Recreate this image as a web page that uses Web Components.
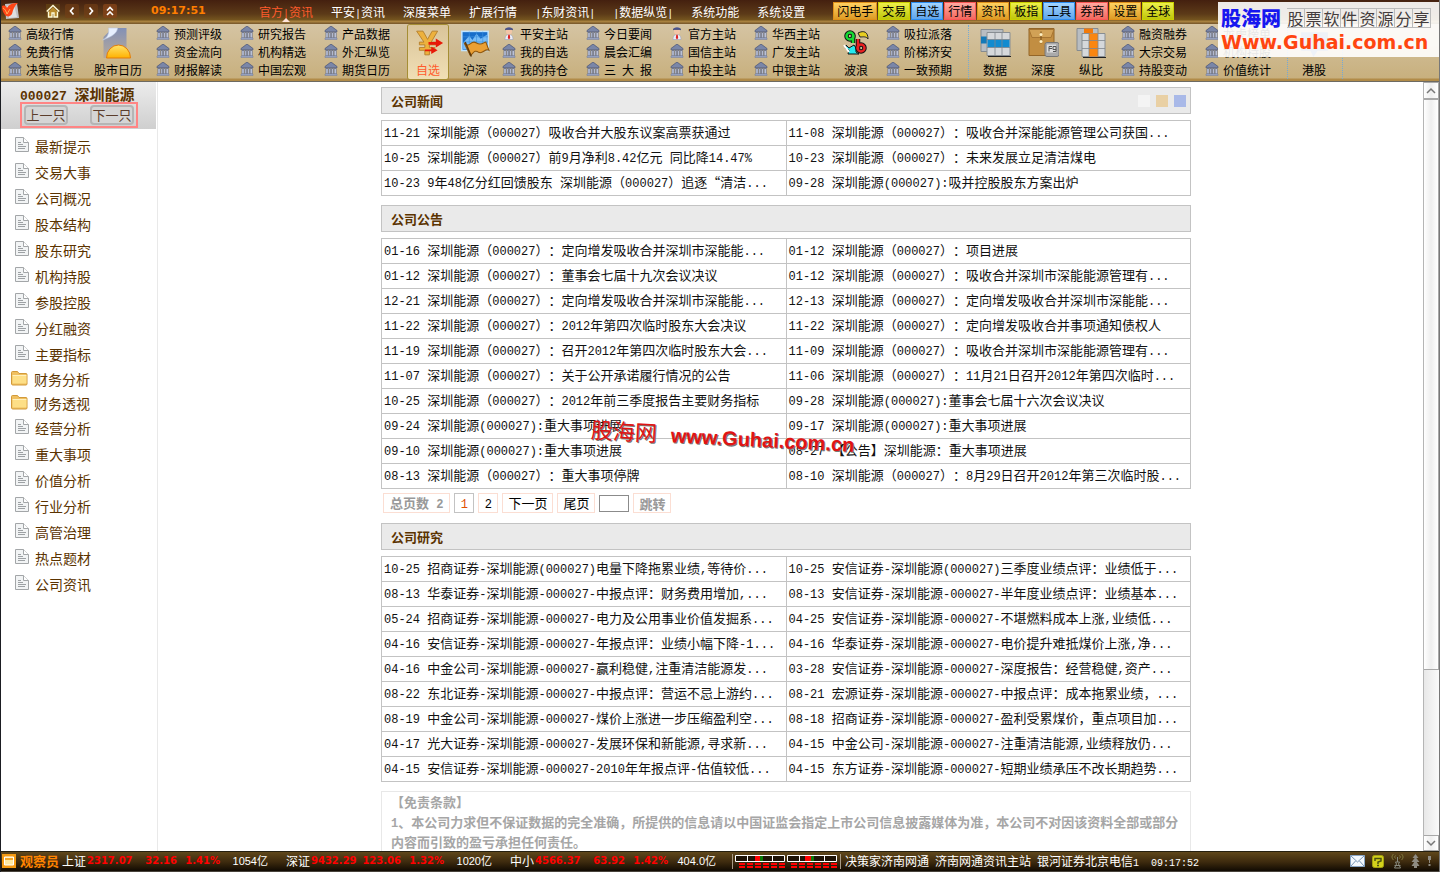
<!DOCTYPE html>
<html lang="zh-CN">
<head>
<meta charset="utf-8">
<title>深圳能源 000027 - 公司资讯</title>
<style>
html,body{margin:0;height:100%}
body{font:12px/18px "Noto Sans CJK SC",sans-serif;color:#000;background:#fff;overflow:hidden;text-spacing-trim:space-all}
</style>
</head>
<body>
<stock-app></stock-app>
<script>
const ICONS = {
bank:['0 0 14 14','<path d="M7 0 1 4.500v1.300h12V4.500z" fill="#7a86a8" stroke="#4f597a" stroke-width=".8"/><path d="M2 6.500h2V12H2zM5 6.500h1.600V12H5zM7.600 6.500h1.600V12H7.600zM10.200 6.500h2V12h-2z" fill="#d5dcf0" stroke="#59637f" stroke-width=".7"/><path d="M1 12h12v1.500H1z" fill="#a4afcb" stroke="#6b7696" stroke-width=".5"/>'],
person:['0 0 14 14','<path d="M3 13.500c0-4 2-5 4-5s4 1 4 5z" fill="#eceff8" stroke="#98a1be" stroke-width=".6"/><path d="M6.300 8.500h1.400L8.200 12 7 13.500 5.800 12z" fill="#d22"/><circle cx="7" cy="5.500" r="3" fill="#f3c6a8"/><path d="M3 4.500C3 0 11 0 11 4.500L10 3.500H4z" fill="#535c94"/><path d="M3 3.200h8" stroke="#39427a"/>'],
doc:['0 0 16 17','<path d="M1.500 1.500h8l5 5v9h-13z" fill="#f2f4f5" stroke="#a3a6a8" stroke-linejoin="round"/><path d="M9.500 1.500v5h5" fill="#fff" stroke="#a3a6a8"/><path d="M4 6.500h3M4 8.500h5M4 10.500h8M4 12.500h7" stroke="#9da1a4"/>'],
folder:['0 0 17 16','<path d="M.5 2.500c0-.6.4-1 1-1h5l1.500 2h7c.6 0 1 .4 1 1v9.500c0 .6-.4 1-1 1h-13c-1 0-1.500-.5-1.500-1z" fill="#f0c060" stroke="#d29a3a"/><path d="M1.500 6h14v7.500h-14z" fill="#fddf87"/><path d="M1.500 5.500h14" stroke="#fff0bd"/>'],
home:['0 0 14 14','<path d="M0 0h14v14H0z" fill="#6b4a12" opacity=".6"/><path d="M3 7v6h3V9h2v4h3V7L7 3z" fill="#b98b2c"/><path d="M.7 7.500 7 1.500l6.300 6M2.500 7.500V13H6V9h2v4h3.500V7.500" fill="none" stroke="#fffbd8" stroke-width="1.400"/>'],
left:['0 0 14 14','<rect width="14" height="14" rx="2" fill="#744015" opacity=".6"/><path d="M8.500 3.500 5.500 7l3 3.500" fill="none" stroke="#fff" stroke-width="1.700"/>'],
right:['0 0 14 14','<rect width="14" height="14" rx="2" fill="#744015" opacity=".6"/><path d="M5.500 3.500 8.500 7l-3 3.500" fill="none" stroke="#fff" stroke-width="1.700"/>'],
up:['0 0 14 14','<rect width="14" height="14" rx="2" fill="#844419" opacity=".8"/><path d="M4 6.500 7 3.500l3 3M4 11l3-3 3 3" fill="none" stroke="#fff" stroke-width="1.600"/>'],
logo:['0 0 18 17','<path d="M3 1 15 0l2 15-13 1z" fill="#bfc0c3"/><path d="m5 3 7-1 3 12-8 1z" fill="#e0e0e0"/><path d="M0 3c3-1 4 0 5 2 2-4 6-5 11-5-3 2-5 6-6 11-2 3-5 3-7 1C1 9 0 7 0 3z" fill="#ff4616"/><path d="M1 5c2 1 3 3 4 6l3-5" fill="none" stroke="#ffad55"/>'],
calendar:['0 0 30 32','<defs><linearGradient id="g" x2="0" y2="1"><stop stop-color="#8290b6"/><stop offset="1" stop-color="#b8aa9a"/></linearGradient><linearGradient id="s" x2="0" y2="1"><stop stop-color="#ffe36a"/><stop offset="1" stop-color="#ffb100"/></linearGradient></defs><path d="M10 1h14v22l-5 8H1V10z" fill="url(#g)"/><path d="M0 13C5 11 7 6 6 1h9C15 6 9 10 0 13z" fill="#e7f0ff" stroke="#bac8e1" stroke-width=".6"/><path d="M4 31a12 13 0 0 1 24 0z" fill="url(#s)" stroke="#e37c0a"/>'],
yen:['0 0 34 32','<path d="M4 3h7l5 9 5-9h6l-7 12h5v3h-7v3h6v3h-6v5h-5v-5H7v-3h6v-3H7v-3h5z" fill="#edb13d" stroke="#b47e2b"/><path d="M17 15h8v-4l8 5-8 5v-3h-8zM13 23h7v-3l7 4-7 4v-3h-7z" fill="#e71908"/>'],
chart:['0 0 30 30','<path d="M1 3h27v20H1z" fill="#bfe4ff"/><path d="M2.500 4.500h24v17h-24z" fill="#176dca"/><path d="m3 15 6-7 3 4 4-6 4 5 6-4v14H3z" fill="#79bdf7"/><path d="M3 9h24M3 14h24M9 4v18M16 4v18M22 4v18" stroke="#3b91df" stroke-width=".6"/><path d="M4 15c6 6 6-4 12 0 5 3 7-1 9-1l3 8c-4-2-6 4-10 2-4-3-5 1-8 3z" fill="#eaa035" stroke="#8d550d"/><path d="M5 14 11 28" stroke="#5e3808" stroke-width="1.500"/>'],
wave:['0 0 26 26','<path d="M15 3c6-3 10-1 10 6-2-3-5-2-8-2z" fill="#e8ce20" stroke="#222"/><circle cx="7" cy="6" r="3.500" fill="none" stroke="#111" stroke-width="4.500"/><path d="M10 5v8" stroke="#111" stroke-width="4.500"/><circle cx="7" cy="6" r="3.500" fill="none" stroke="#16d933" stroke-width="2.500"/><path d="M10 5v8" stroke="#16d933" stroke-width="2.500"/><path d="m3 15 3 3 5-3 2 3v4l3 2H5l1-4-3-1z" fill="#25e9ee" stroke="#111"/><path d="m1 15 5 7" stroke="#fff" stroke-width="2"/><circle cx="18" cy="18" r="3.500" fill="none" stroke="#111" stroke-width="4.500"/><path d="M15 9v10" stroke="#111" stroke-width="4.500"/><circle cx="18" cy="18" r="3.500" fill="none" stroke="#e92020" stroke-width="2.500"/><path d="M15 9v10" stroke="#e92020" stroke-width="2.500"/>'],
data:['0 0 31 31','<path d="M1 2h22v22H1z" fill="#b8bdc2" stroke="#858b91"/><path d="M1 9h8v7H1z" fill="#1479b8"/><path d="M7 5h23v23H7z" fill="#d5d8db" stroke="#888e93"/><path d="M7.500 12h22v8h-22z" fill="#118bd0"/><path d="M15 5v23M22 5v23M7 12h23M7 20h23" stroke="#7f868d" stroke-width=".8"/><path d="M8 29h23" stroke="#222"/>'],
depth:['0 0 31 31','<path d="M1 1h25v27H1z" fill="#c28e42" stroke="#946628"/><path d="M1 2h25l-3 8H4z" fill="#d1a156" stroke="#a77532"/><path d="M13 4v12" stroke="#754d16"/><circle cx="13" cy="7" r="1.500" fill="#fff1c4"/><circle cx="13" cy="14" r="1.500" fill="#fff1c4"/><rect x="17" y="15" width="14" height="14" rx="2" fill="#aaa" stroke="#777"/><path d="M19 17h9v8h-9z" fill="#ddd"/><path d="M21 24v-5h3m-3 2h3m4 1h-3v-3h3v5h-3" fill="none" stroke="#555"/>'],
ratio:['0 0 31 31','<path d="M1 1h21v22H1z" fill="#b8bdc2" stroke="#858b91"/><path d="M8 1h9v5H8z" fill="#f27a0b"/><path d="M6 6h23v23H6z" fill="#d5d8db" stroke="#888e93"/><path d="M13 6h9v23h-9z" fill="#fa8610"/><path d="M13 6v23M22 6v23M6 13h23M6 21h23" stroke="#7f868d" stroke-width=".8"/><path d="M7 30h23" stroke="#222"/>'],
balloon:['0 0 30 31','<path d="M2 5h26v18H18l-4 6-3-6H2z" fill="#5478b4"/><path d="m5 18 6-8 4 7 4-7 6 8" fill="none" stroke="#e43a2f" stroke-width="2"/>'],
window:['0 0 14 14','<path d="M0 0h14v14H0z" fill="#f59a12"/><path d="M2.500 3h9v8h-9z" fill="#ffe9a3" stroke="#fff"/><path d="M3 4h8v2H3z" fill="#f7a929"/>'],
mail:['0 0 15 13','<path d="M.5.5h14v11H.5z" fill="#f4f8fd" stroke="#88a4c4"/><path d="m1 1 6.500 6L14 1M1 11l4.500-5M14 11 9.500 6" fill="none" stroke="#7894b4"/>'],
help:['0 0 12 13','<rect x=".5" y=".5" width="11" height="12" rx="2" fill="#d4d11b" stroke="#a4a111"/><path d="M3 6V3.500h6V6L6 7v2M5 10.500h2" fill="none" stroke="#4c5210" stroke-width="1.500"/>'],
tower:['0 0 13 16','<path d="M2.500 1c-2 2-2 4 0 6M10.500 1c2 2 2 4 0 6M4.500 2.500c-1 1-1 2 0 3M8.500 2.500c1 1 1 2 0 3" fill="none" stroke="#858042"/><path d="M6.500 4v5M4.500 9h4l-1 2 2 4h-6l2-4zM3.500 12.500h6" fill="none" stroke="#898b80"/>'],
tree:['0 0 9 14','<path d="m4.500 0 3 4h-6zM4.500 3l4 5h-8zM4.500 6l4 6h-8zM3 12h3v2H3z" fill="#8f8b81"/>'],
pin:['0 0 5 12','<path d="M1 1h3v4H1zM2 5h1v3H2zM1.500 9h2v2h-2z" fill="#8f8b81"/>'],
bars:['0 0 102 15','<path d="M.5 1.500h49v6H.5zM52.500 1.500h49v6h-49z" fill="#1c1206" stroke="#fff"/><path d="M12.500 1v6M37.500 1v6M64.500 1v6M89.500 1v6" stroke="#fff"/><path d="M20 2h5v5h-5z" fill="#f00"/><path d="M25 2h3v5h-3z" fill="#087b08"/><path d="M70 2h6v5h-6z" fill="#f00"/><path d="M76 2h3v5h-3z" fill="#087b08"/><path d="M4 10h46M56 10h46M4 13h46M56 13h46" stroke="#f00" stroke-width="2" stroke-dasharray="6 2"/>']
};

/* Latin runs are set in a monospaced face so that two of them fill one Han square. */
const mix = t => t.replace(/[\x20-\x7e]+/g, s => `<span class="l">${s}</span>`);

class Base extends HTMLElement {
  connectedCallback() {
    if (this.shadowRoot) return;
    this.attachShadow({mode: 'open'}).innerHTML =
      `<style>*{box-sizing:border-box}a{color:inherit;text-decoration:none}button,input{font:inherit;margin:0;padding:0}.l{font-family:"Liberation Mono",monospace;line-height:1;white-space:pre}${this.css()}</style>${this.html()}`;
  }
  css() { return ''; }
  html() { return '<slot></slot>'; }
}
const define = (n, c) => customElements.define(n, c);

define('ui-icon', class extends Base {
  css() { return ':host{display:block;flex:none}svg{display:block;width:100%;height:100%}'; }
  html() { const [box, body] = ICONS[this.getAttribute('name')]; return `<svg viewBox="${box}" aria-hidden="true">${body}</svg>`; }
});

define('menu-bar', class extends Base {
  css() { return `:host{display:flex;align-items:center;height:24px;background:linear-gradient(#44200f 0,#5c3a18 14px,#75551f 20px,#a8813f 21px,#a8813f 22px,#7d5c2d 23px);color:#fff;padding:0 0 2px 1px}
.tools{display:flex;gap:5px;margin-left:26px}.tools button{border:0;background:none;display:block}.tools ui-icon{width:14px;height:14px}
.logo{width:18px;height:17px}time{font:bold 11px/18px "DejaVu Sans",sans-serif;color:#ff7e00;margin-left:34px;width:108px}
nav{display:flex;gap:18px;padding-top:1px}nav a{position:relative}nav .l{font-size:10px}.on{color:#ff5b2c}
.on::after{content:"";position:absolute;left:23px;top:15px;border:4px solid transparent;border-top:0;border-bottom-color:#ffe4d9}
.quick{display:flex;gap:1px;margin-left:28px}.quick button{height:18px;width:32px;line-height:16px;border:1px solid #e0911a;background:linear-gradient(#ffd161,#dd9b25);color:#000;white-space:nowrap}
.quick button:first-child{width:44px}.quick .y{background:linear-gradient(#eef04a,#bfc60c);border-color:#c9cf00}.quick .b{background:linear-gradient(#a3d4ff,#5fa5ec);border-color:#2d8df0}.quick .r{background:linear-gradient(#ffaaa0,#f4685e);border-color:#fa5757}`; }
  html() {
    const q = [['闪电手',''],['交易','y'],['自选','b'],['行情','r'],['资讯',''],['板指','y'],['工具','b'],['券商','r'],['设置',''],['全球','y']];
    const t = [['home','首页'],['left','后退'],['right','前进'],['up','置顶']];
    return `<ui-icon class="logo" name="logo"></ui-icon><div class="tools">${t.map(([n,l]) => `<button aria-label="${l}"><ui-icon name="${n}"></ui-icon></button>`).join('')}</div><time>09:17:51</time>
<nav>${['官方|资讯','平安|资讯','深度菜单','扩展行情','|东财资讯|','|数据纵览|','系统功能','系统设置'].map((s,i) => `<a href="#" class="${i ? '' : 'on'}">${mix(s)}</a>`).join('')}</nav>
<div class="quick">${q.map(([s,c]) => `<button class="${c}">${s}</button>`).join('')}</div>`;
  }
});

define('tool-group', class extends Base {
  css() { return `:host{display:grid;grid-auto-rows:18px;width:72px;flex:none}a{display:flex;gap:4px;white-space:nowrap}ui-icon{width:14px;height:14px;margin-top:1px}.l{font-size:10px}`; }
  html() { return this.getAttribute('items').split(',').map(s => {
    const p = s[0] === '*'; return `<a href="#"><ui-icon name="${p ? 'person' : 'bank'}"></ui-icon><span>${mix(p ? s.slice(1) : s)}</span></a>`; }).join(''); }
});
define('tool-button', class extends Base {
  css() { return `:host{display:block;width:36px;flex:none}button{display:grid;grid-template-rows:36px 18px;justify-items:center;justify-content:center;align-items:center;width:100%;border:0;background:none;color:#000;white-space:nowrap}
ui-icon{width:31px;height:32px}:host([active]) button{background:linear-gradient(#d9c49a,#f0dfb5);box-shadow:0 0 0 1px #a58e35;border-radius:2px;color:#ff5b2c}
:host([wide]){width:52px}:host([active]){width:40px}:host([slim]){width:30px}:host([small]) ui-icon{width:26px;height:26px}`; }
  html() { return `<button><ui-icon name="${this.getAttribute('icon')}"></ui-icon><span>${this.getAttribute('label')}</span></button>`; }
});
define('tool-bar', class extends Base {
  css() { return `:host{display:flex;gap:12px;height:58px;padding:1px 0 0 7px;background:linear-gradient(#d5c4a3,#c8b07e 54px,#b18b48 55px,#b18b48 57px,#6d6a62 57px);overflow:hidden}
i{width:1px;flex:none;height:54px;border-left:1px dotted #75a9d4;margin:0 -4px 0 -2px}`; }
  html() {
    const g = s => `<tool-group items="${s}"></tool-group>`, b = (i,l,a='') => `<tool-button icon="${i}" label="${l}" ${a}></tool-button>`;
    return g('高级行情,免费行情,决策信号')+b('calendar','股市日历','wide')+g('预测评级,资金流向,财报解读')+g('研究报告,机构精选,中国宏观')+g('产品数据,外汇纵览,期货日历')
      +b('yen','自选','active')+b('chart','沪深','slim')+g('*平安主站,我的自选,我的持仓')+g('今日要闻,晨会汇编,三 大 报')+g('*官方主站,国信主站,中投主站')+g('华西主站,广发主站,中银主站')
      +b('wave','波浪','small')+g('吸拉派落,阶梯济安,一致预期')+'<i></i>'+b('data','数据')+b('depth','深度')+b('ratio','纵比')+g('融资融券,大宗交易,持股变动')+g('龙虎榜单,机构持股,价值统计')+'<i></i>'+b('balloon','港股')+'<i></i>';
  }
});

define('site-badge', class extends Base {
  css() { return `:host{display:grid;grid-template-rows:28px 26px;width:221px;height:55px;padding-left:3px;background:rgba(255,255,255,.9);white-space:nowrap}
.t{display:flex;align-items:center;gap:6px;padding-top:4px}b{font-size:20px;line-height:24px;color:#1717ef;font-weight:900}
.s{display:flex}.s span{width:18px;border:1px solid #bbb;border-left:0;font-size:16px;line-height:18px;color:#443c3c;text-align:center}
a{font:bold 19px/24px "DejaVu Sans",sans-serif;color:#ff4510}`; }
  html() { return `<div class="t"><b>股海网</b><div class="s">${[...'股票软件资源分享'].map(c => `<span>${c}</span>`).join('')}</div></div><a href="#">Www.Guhai.com.cn</a>`; }
});

define('side-nav', class extends Base {
  css() { return `:host{display:block;width:157px;border-right:1px solid #e9e9e9;color:#5b3300;font-size:14px}
header{width:155px;height:47px;background:linear-gradient(#ececec,#cfcfcf);padding:3px 0 0 19px}
h1{margin:0;font-size:15px;line-height:18px;white-space:nowrap}h1 .l{font-size:13px}
.sw{display:flex;justify-content:space-between;align-items:center;width:118px;height:26px;margin-top:-1px;border:2px solid #ff8585;padding:0 2px}
.sw button{width:44px;height:20px;border:2px solid #b5b5b5;border-radius:4px;background:#d5d5d5;color:#5b3d2c;font-size:13px;line-height:14px;white-space:nowrap}
ul{list-style:none;margin:4px 0 0;padding:0}a{display:flex;align-items:center;height:26px;gap:5px;padding-left:13px}
ui-icon{width:16px;height:17px;margin-top:-4px}.f{height:24px;padding-left:10px;gap:6px}.f ui-icon{width:17px;height:16px;margin-top:-2px}`; }
  html() {
    const items = '最新提示 交易大事 公司概况 股本结构 股东研究 机构持股 参股控股 分红融资 主要指标 *财务分析 *财务透视 经营分析 重大事项 价值分析 行业分析 高管治理 热点题材 公司资讯'.split(' ');
    return `<header><h1>${mix('000027 ')}深圳能源</h1><div class="sw"><button>上一只</button><button>下一只</button></div></header>
<ul>${items.map(s => s[0] === '*' ? `<li><a class="f" href="#"><ui-icon name="folder"></ui-icon>${s.slice(1)}</a></li>` : `<li><a href="#"><ui-icon name="doc"></ui-icon>${s}</a></li>`).join('')}</ul>`;
  }
});

const DATA = {
news:`11-21 深圳能源（000027）吸收合并大股东议案高票获通过
11-08 深圳能源（000027）：吸收合并深能能源管理公司获国...
10-25 深圳能源（000027）前9月净利8.42亿元 同比降14.47%
10-23 深圳能源（000027）：未来发展立足清洁煤电
10-23 9年48亿分红回馈股东 深圳能源（000027）追逐“清洁...
09-28 深圳能源(000027):吸并控股股东方案出炉`,
notice:`01-16 深圳能源（000027）：定向增发吸收合并深圳市深能能...
01-12 深圳能源（000027）：项目进展
01-12 深圳能源（000027）：董事会七届十九次会议决议
01-12 深圳能源（000027）：吸收合并深圳市深能能源管理有...
12-21 深圳能源（000027）：定向增发吸收合并深圳市深能能...
12-13 深圳能源（000027）：定向增发吸收合并深圳市深能能...
11-22 深圳能源（000027）：2012年第四次临时股东大会决议
11-22 深圳能源（000027）：定向增发吸收合并事项通知债权人
11-19 深圳能源（000027）：召开2012年第四次临时股东大会...
11-09 深圳能源（000027）：吸收合并深圳市深能能源管理有...
11-07 深圳能源（000027）：关于公开承诺履行情况的公告
11-06 深圳能源（000027）：11月21日召开2012年第四次临时...
10-25 深圳能源（000027）：2012年前三季度报告主要财务指标
09-28 深圳能源(000027):董事会七届十六次会议决议
09-24 深圳能源(000027):重大事项进展
09-17 深圳能源(000027):重大事项进展
09-10 深圳能源(000027):重大事项进展
08-27 【公告】深圳能源：重大事项进展
08-13 深圳能源（000027）：重大事项停牌
08-10 深圳能源（000027）：8月29日召开2012年第三次临时股...`,
research:`10-25 招商证券-深圳能源(000027)电量下降拖累业绩,等待价...
10-25 安信证券-深圳能源(000027)三季度业绩点评：业绩低于...
08-13 华泰证券-深圳能源-000027-中报点评：财务费用增加,...
08-13 安信证券-深圳能源-000027-半年度业绩点评：业绩基本...
05-24 招商证券-深圳能源-000027-电力及公用事业价值发掘系...
04-25 安信证券-深圳能源-000027-不堪燃料成本上涨,业绩低...
04-16 安信证券-深圳能源-000027-年报点评：业绩小幅下降-1...
04-16 华泰证券-深圳能源-000027-电价提升难抵煤价上涨,净...
04-16 中金公司-深圳能源-000027-赢利稳健,注重清洁能源发...
03-28 安信证券-深圳能源-000027-深度报告：经营稳健,资产...
08-22 东北证券-深圳能源-000027-中报点评：营运不忌上游约...
08-21 宏源证券-深圳能源-000027-中报点评：成本拖累业绩，...
08-19 中金公司-深圳能源-000027-煤价上涨进一步压缩盈利空...
08-18 招商证券-深圳能源-000027-盈利受累煤价，重点项目加...
04-17 光大证券-深圳能源-000027-发展环保和新能源,寻求新...
04-15 中金公司-深圳能源-000027-注重清洁能源,业绩释放仍...
04-15 安信证券-深圳能源-000027-2010年年报点评-估值较低...
04-15 东方证券-深圳能源-000027-短期业绩承压不改长期趋势...`};

define('news-section', class extends Base {
  css() { return `:host{display:block;font-size:13px;color:#111}
h2{display:flex;justify-content:space-between;align-items:center;margin:0 0 6px;height:27px;padding:0 4px 0 9px;background:#eaeaea;border:1px solid #c3c3c3;font-size:13px;color:#5b3300}
table{width:100%;table-layout:fixed;border-collapse:collapse}td{height:25px;padding:0 2px 2px;border:1px solid #c3c3c3;white-space:nowrap;line-height:20px;overflow:hidden}.l{font-size:12px}`; }
  html() {
    const r = DATA[this.getAttribute('source')].split('\n'); let rows = '';
    for (let i = 0; i < r.length; i += 2) rows += `<tr>${[r[i], r[i+1]].map(s => `<td><a href="#">${mix(s)}</a></td>`).join('')}</tr>`;
    return `<h2>${this.getAttribute('heading')}<slot></slot></h2><table><tbody>${rows}</tbody></table>`;
  }
});
define('theme-swatches', class extends Base {
  css() { return ':host{display:flex;gap:6px}button{width:12px;height:12px;border:0;background:#f4f4f4}.s{background:#e9d0a4}.b{background:#a9b9e8}'; }
  html() { return '<button aria-label="白色"></button><button class="s" aria-label="米色"></button><button class="b" aria-label="蓝色"></button>'; }
});
define('page-nav', class extends Base {
  css() { return `:host{display:flex;align-items:center;gap:4px;margin:4px 0 1px 2px;font-size:13px}
a,span.t,button{height:20px;min-width:20px;padding:0 5px;border:1px solid #fbded3;background:#fff;text-align:center;line-height:17px;white-space:nowrap}
span.t{padding:0 6px}a.on{border-color:#c3c3c3;color:#e05000}.g{color:#999;font-weight:bold}.l{font-size:12px}input{width:30px;height:17px;border:1px solid #8b8b8b}`; }
  html() { return `<span class="t g">总页数${mix(' 2')}</span><a href="#" class="on">${mix('1')}</a><a href="#">${mix('2')}</a><a href="#">下一页</a><a href="#">尾页</a><input aria-label="页码"><button class="g">跳转</button>`; }
});
define('legal-note', class extends Base {
  css() { return ':host{display:block;border:1px solid #e8e8e8;padding:0 9px;font-size:13px;line-height:20px;font-weight:bold;color:#a6a6a6}p{margin:0}.l{font-size:12px}'; }
  html() { return `<p>【免责条款】</p><p>${mix('1')}、本公司力求但不保证数据的完全准确，所提供的信息请以中国证监会指定上市公司信息披露媒体为准，本公司不对因该资料全部或部分内容而引致的盈亏承担任何责任。</p>`; }
});
define('page-stamp', class extends Base {
  css() { return `:host{display:flex;gap:14px;align-items:baseline;white-space:nowrap;color:#e01414;text-shadow:1px 1px 0 #777;transform:rotate(3deg);transform-origin:0 50%;pointer-events:none}
b{font:bold 20px/26px "Liberation Sans",sans-serif}span{font-size:22px;line-height:26px}`; }
  html() { return '<span>股海网</span><b>www.Guhai.com.cn</b>'; }
});
define('scroll-rail', class extends Base {
  css() { return `:host{display:grid;grid-template-rows:17px 571fr 165fr 16px;width:16px;background:#f2f2f2;border-left:1px solid #b5b5b5}
button,div{border:1px solid #a8a8a8;border-left:0;background:linear-gradient(90deg,#fff,#eee 50%,#fff);display:block;width:100%}svg{display:block;margin:auto}
.track{border:0;background:linear-gradient(90deg,#e8e8e8,#fafafa)}`; }
  html() { return `<button aria-label="向上滚动"><svg width="10" height="8"><path d="m1 6 4-4 4 4" fill="none" stroke="#777" stroke-width="1.500"/></svg></button><div></div><div class="track"></div><button aria-label="向下滚动"><svg width="10" height="8"><path d="m1 2 4 4 4-4" fill="none" stroke="#777" stroke-width="1.500"/></svg></button>`; }
});
define('index-quote', class extends Base {
  css() { return `:host{display:grid;grid-template-columns:25px 46px 44px 43px 48px;flex:none;white-space:nowrap}b{font:bold 10px/18px "DejaVu Sans",sans-serif;color:#f00}b+b,.v{text-align:right}.v{font:11px/18px "Liberation Sans","Noto Sans CJK SC",sans-serif}`; }
  html() { const [n,a,b,c,v] = this.getAttribute('values').split(' '); return `<span>${n}</span><b>${a}</b><b>${b}</b><b>${c}</b><span class="v">${v}</span>`; }
});
define('status-bar', class extends Base {
  css() { return `:host{display:flex;align-items:center;height:21px;padding:0 7px 2px 1px;background:linear-gradient(#5f471b,#3d2a0e 10px,#100a02 19px,#807c76 20px);color:#fff;white-space:nowrap;border-top:1px solid #26200f}
.w{width:14px;height:14px;margin-right:4px}strong{color:#ff8400;font-size:13px;width:42px}.q{display:flex;gap:18px}
.bars{width:102px;height:15px;margin-left:2px}.bx{display:flex;border:solid #a79a85;border-width:0 1px;margin:0 4px 0 16px;padding-right:3px}
.hosts{display:flex;gap:6px}.l{font-size:10px}time{margin-left:6px}.tray{display:flex;align-items:center;gap:7px;margin-left:auto}
.m{width:15px;height:13px}.h{width:12px;height:13px}.t{width:13px;height:16px}.r{width:9px;height:14px}.p{width:5px;height:12px}`; }
  html() { return `<ui-icon class="w" name="window"></ui-icon><strong>观察员</strong>
<div class="q"><index-quote values="上证 2317.07 32.16 1.41% 1054亿"></index-quote><index-quote values="深证 9432.29 123.06 1.32% 1020亿"></index-quote><index-quote values="中小 4566.37 63.92 1.42% 404.0亿"></index-quote></div>
<div class="bx"><ui-icon class="bars" name="bars"></ui-icon></div>
<div class="hosts"><span>决策家济南网通</span><span>济南网通资讯主站</span><span>银河证券北京电信${mix('1')}</span><time>${mix('09:17:52')}</time></div>
<div class="tray"><ui-icon class="m" name="mail"></ui-icon><ui-icon class="h" name="help"></ui-icon><ui-icon class="t" name="tower"></ui-icon><ui-icon class="r" name="tree"></ui-icon><ui-icon class="p" name="pin"></ui-icon></div>`; }
});
define('stock-app', class extends Base {
  css() { return `:host{display:grid;grid-template-rows:auto auto minmax(0,1fr) auto;grid-template-columns:minmax(0,1fr);height:100vh;position:relative;border-left:1px solid #1b1d22;border-right:1px solid #777;box-sizing:border-box}
.mid{display:flex;min-height:0}main{flex:1;min-width:0;overflow:hidden;padding:5px 9px 0 0}
.page{position:relative;width:64%;min-width:810px;max-width:810px;margin:0 auto;display:grid;gap:9px}
site-badge{position:absolute;right:0;top:2px}page-stamp{position:absolute;left:210px;top:328px}`; }
  html() { return `<menu-bar></menu-bar><tool-bar></tool-bar><div class="mid"><side-nav></side-nav><main><div class="page">
<news-section source="news" heading="公司新闻"><theme-swatches></theme-swatches></news-section>
<div><news-section source="notice" heading="公司公告"></news-section><page-nav></page-nav></div>
<news-section source="research" heading="公司研究"></news-section><legal-note></legal-note>
<page-stamp></page-stamp></div></main><scroll-rail></scroll-rail></div><status-bar></status-bar><site-badge></site-badge>`; }
});
</script>
</body>
</html>
